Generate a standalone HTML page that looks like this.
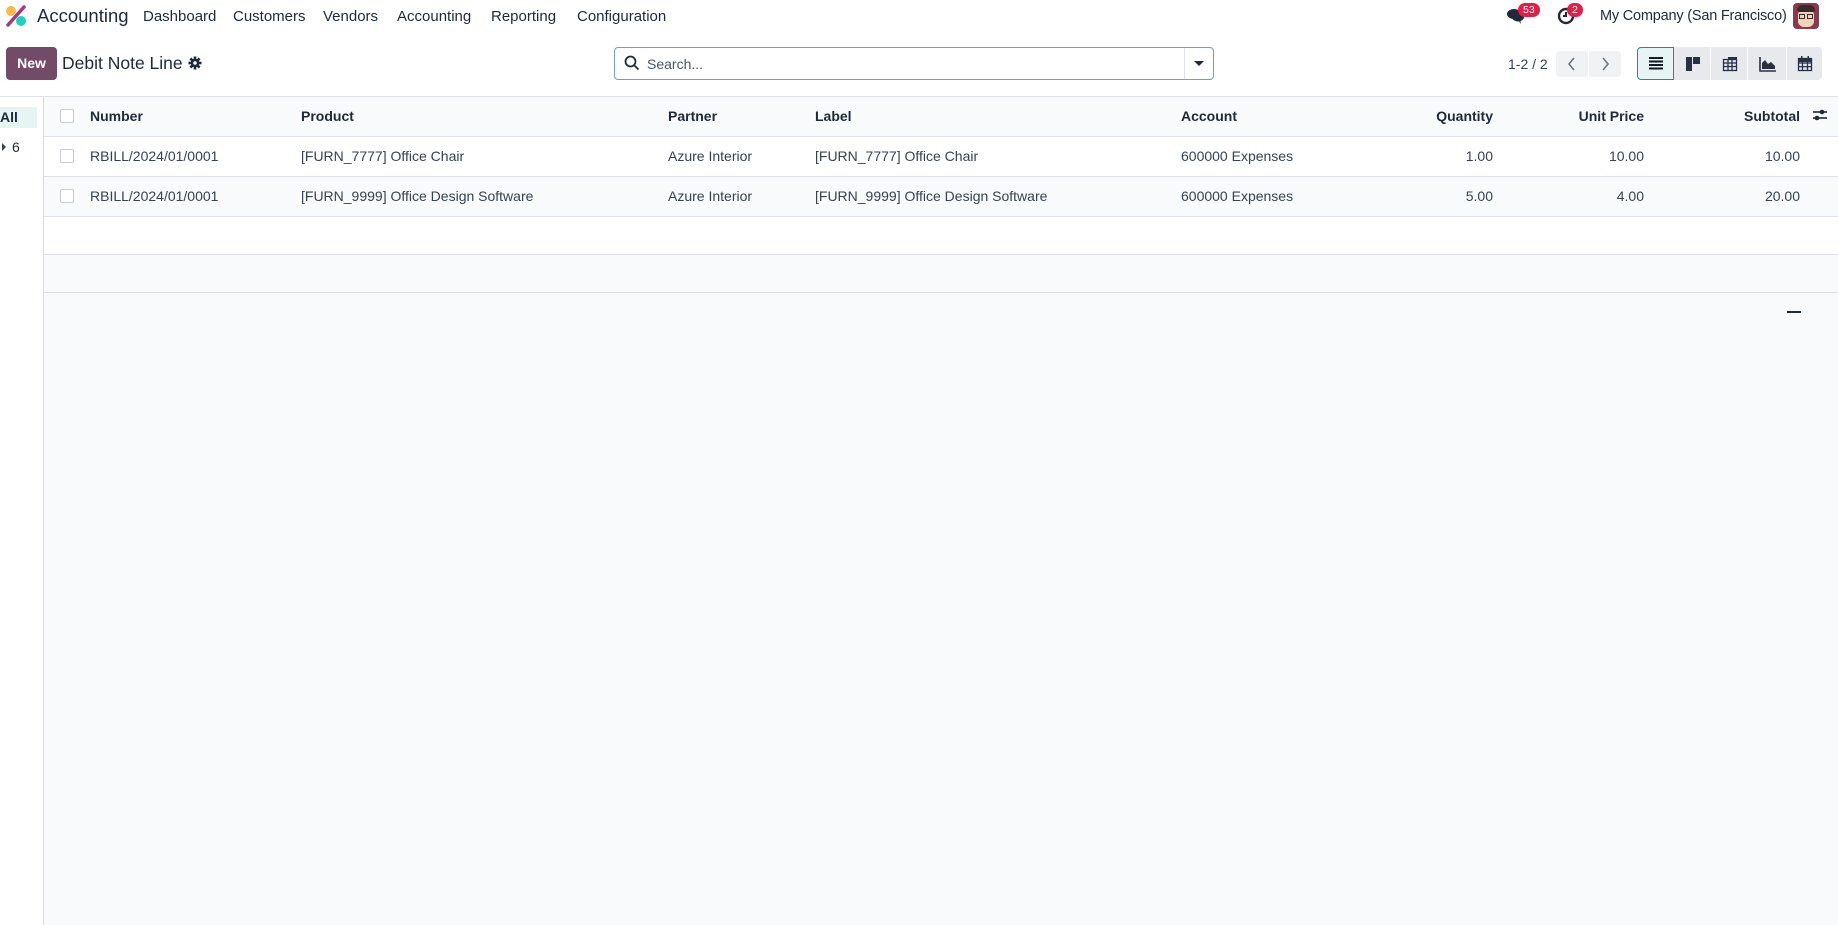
<!DOCTYPE html>
<html><head><meta charset="utf-8"><style>
*{box-sizing:border-box;margin:0;padding:0}
body{width:1838px;height:925px;overflow:hidden;background:#fff;font-family:"Liberation Sans",sans-serif;color:#374151;font-size:14px;position:relative}
.a{position:absolute;white-space:nowrap}
.nav{color:#1f2937;font-size:15px;top:8px}
.hd{font-weight:bold;color:#1f2937;font-size:14px}
.cb{position:absolute;width:14px;height:14px;border:1px solid #c7cbd1;background:#fff;border-radius:2px}
.hl{position:absolute;left:44px;right:0;height:1px;background:#dee2e6}
.vb{position:absolute;top:47px;height:33px;background:#e7e9ed;border-right:1px solid #fff}
</style></head><body>
<svg class="a" style="left:5px;top:5px" width="22" height="22" viewBox="0 0 22 22">
<circle cx="6" cy="6" r="5" fill="#fbb945"/><circle cx="16" cy="16" r="5" fill="#1ad3bb"/>
<line x1="3" y1="20" x2="19" y2="2" stroke="#a2397f" stroke-width="3.5" stroke-linecap="round"/></svg>
<div class="a" style="left:37px;top:5px;font-size:18.5px;color:#1f2937">Accounting</div>
<div class="a nav" style="left:143px">Dashboard</div>
<div class="a nav" style="left:233px">Customers</div>
<div class="a nav" style="left:323px">Vendors</div>
<div class="a nav" style="left:397px">Accounting</div>
<div class="a nav" style="left:491px">Reporting</div>
<div class="a nav" style="left:577px">Configuration</div>
<svg class="a" style="left:1506px;top:7px" width="20" height="18" viewBox="0 0 20 18"><ellipse cx="8" cy="7" rx="7" ry="5" fill="#1f2937"/><ellipse cx="12" cy="10" rx="6" ry="4.5" fill="#1f2937"/><path d="M12 13 L15 17 L14 12Z" fill="#1f2937"/></svg>
<div class="a" style="left:1518px;top:3px;background:#e11d48;color:#fff;font-size:10.5px;border-radius:8px;padding:1px 5px">53</div>
<svg class="a" style="left:1557px;top:7px" width="18" height="18" viewBox="0 0 18 18"><circle cx="9" cy="9" r="7" fill="none" stroke="#1f2937" stroke-width="2.4"/><path d="M9 5V9H6" stroke="#1f2937" stroke-width="2" fill="none"/></svg>
<div class="a" style="left:1567px;top:3px;background:#e11d48;color:#fff;font-size:10.5px;border-radius:8px;padding:1px 5px">2</div>
<div class="a" style="left:1600px;top:8px;font-size:14.5px;color:#1f2937;letter-spacing:-0.2px">My Company (San Francisco)</div>
<div class="a" style="left:1793px;top:3px;width:26px;height:26px;border-radius:4px;background:#8a3a4e;overflow:hidden">
<div style="position:absolute;left:5px;top:6px;width:16px;height:18px;background:#f3d3b8;border-radius:6px"></div>
<div style="position:absolute;left:4px;top:2px;width:18px;height:7px;background:#3a2a2a;border-radius:5px 5px 2px 2px"></div>
<div style="position:absolute;left:6px;top:11px;width:6px;height:5px;border:1.5px solid #333"></div>
<div style="position:absolute;left:14px;top:11px;width:6px;height:5px;border:1.5px solid #333"></div></div>
<div class="a" style="left:6px;top:47px;width:51px;height:33px;background:#714b67;border-radius:4px;color:#fff;font-weight:bold;font-size:14px;line-height:33px;text-align:center">New</div>
<div class="a" style="left:62px;top:53px;font-size:17.5px;color:#1f2937">Debit Note Line</div>
<svg class="a" style="left:188px;top:56px" width="14" height="14" viewBox="0 0 14 14"><g stroke="#1f2937" stroke-width="2.6"><line x1="7" y1="0.5" x2="7" y2="13.5"/><line x1="0.5" y1="7" x2="13.5" y2="7"/><line x1="2.4" y1="2.4" x2="11.6" y2="11.6"/><line x1="11.6" y1="2.4" x2="2.4" y2="11.6"/></g><circle cx="7" cy="7" r="4.2" fill="#1f2937"/><circle cx="7" cy="7" r="1.8" fill="#fff"/></svg>
<div class="a" style="left:614px;top:47px;width:600px;height:33px;border:1px solid #6aa8a5;border-radius:4px;background:#fff"></div>
<svg class="a" style="left:624px;top:55px" width="16" height="16" viewBox="0 0 16 16"><circle cx="6.5" cy="6.5" r="5" fill="none" stroke="#1f2937" stroke-width="1.8"/><line x1="10" y1="10" x2="14.5" y2="14.5" stroke="#1f2937" stroke-width="1.8"/></svg>
<div class="a" style="left:647px;top:56px;color:#4b5563;font-size:14px">Search...</div>
<div class="a" style="left:1184px;top:48px;width:1px;height:31px;background:#dee2e6"></div>
<div class="a" style="left:1194px;top:61px;width:0;height:0;border-left:5px solid transparent;border-right:5px solid transparent;border-top:5px solid #1f2937"></div>
<div class="a" style="left:1508px;top:56px;font-size:14px;color:#374151">1-2 / 2</div>
<div class="a" style="left:1556px;top:51px;width:32px;height:26px;background:#f1f2f4;border-radius:4px 0 0 4px"></div>
<div class="a" style="left:1589px;top:51px;width:32px;height:26px;background:#f1f2f4;border-radius:0 4px 4px 0"></div>
<svg class="a" style="left:1567px;top:57px" width="10" height="14" viewBox="0 0 10 14"><path d="M7 1L2 7L7 13" stroke="#6b7280" stroke-width="1.5" fill="none"/></svg>
<svg class="a" style="left:1600px;top:57px" width="10" height="14" viewBox="0 0 10 14"><path d="M3 1L8 7L3 13" stroke="#6b7280" stroke-width="1.5" fill="none"/></svg>
<div class="vb" style="left:1637px;width:37px;background:#e6f4f4;border:1px solid #2a8a86;border-radius:4px 0 0 4px"></div>
<div class="vb" style="left:1674px;width:37px"></div>
<div class="vb" style="left:1711px;width:37px"></div>
<div class="vb" style="left:1748px;width:39px"></div>
<div class="vb" style="left:1787px;width:35px;border-radius:0 4px 4px 0;border:0"></div>
<svg class="a" style="left:1648px;top:56px" width="16" height="14" viewBox="0 0 16 14"><g stroke="#111827" stroke-width="2"><line x1="1" y1="2" x2="15" y2="2"/><line x1="1" y1="5.5" x2="15" y2="5.5"/><line x1="1" y1="9" x2="15" y2="9"/><line x1="1" y1="12.5" x2="15" y2="12.5"/></g></svg>
<svg class="a" style="left:1685px;top:56px" width="16" height="16" viewBox="0 0 16 16"><rect x="1" y="1" width="6" height="14" fill="#2b2f45"/><rect x="8" y="1" width="7" height="7" fill="#2b2f45"/></svg>
<svg class="a" style="left:1722px;top:56px" width="16" height="16" viewBox="0 0 16 16"><g fill="none" stroke="#2b2f45" stroke-width="1.3"><rect x="1.5" y="3.5" width="13" height="11"/><line x1="1.5" y1="7" x2="14.5" y2="7"/><line x1="1.5" y1="10.5" x2="14.5" y2="10.5"/><line x1="6" y1="3.5" x2="6" y2="14.5"/><line x1="10" y1="3.5" x2="10" y2="14.5"/></g><rect x="6" y="1" width="9" height="2.5" fill="#2b2f45"/></svg>
<svg class="a" style="left:1759px;top:56px" width="18" height="16" viewBox="0 0 18 16"><path d="M1 1V15H17" stroke="#2b2f45" stroke-width="1.6" fill="none"/><path d="M3 13V7L6 4L9 8L12 6L16 10V13Z" fill="#2b2f45"/></svg>
<svg class="a" style="left:1797px;top:55px" width="16" height="17" viewBox="0 0 16 17"><g fill="none" stroke="#2b2f45" stroke-width="1.3"><rect x="1.5" y="3.5" width="13" height="12"/><line x1="1.5" y1="8" x2="14.5" y2="8"/><line x1="1.5" y1="11.7" x2="14.5" y2="11.7"/><line x1="5.5" y1="3.5" x2="5.5" y2="15.5"/><line x1="10.5" y1="3.5" x2="10.5" y2="15.5"/></g><rect x="1.5" y="3" width="13" height="4" fill="#2b2f45"/><rect x="4" y="1" width="1.5" height="3" fill="#2b2f45"/><rect x="10.5" y="1" width="1.5" height="3" fill="#2b2f45"/></svg>
<div class="a" style="left:0;top:96px;width:1838px;height:1px;background:#dee2e6"></div>
<div class="a" style="left:43px;top:97px;width:1px;height:828px;background:#d8dadd"></div>
<div class="a" style="left:0;top:107px;width:37px;height:21px;background:#e6f4f4"></div>
<div class="a" style="left:0;top:109px;font-weight:bold;color:#1f2937;font-size:14px">All</div>
<div class="a" style="left:2px;top:143px;width:0;height:0;border-top:4px solid transparent;border-bottom:4px solid transparent;border-left:4px solid #374151"></div>
<div class="a" style="left:12px;top:139px;color:#1f2937;font-size:14px">6</div>
<div class="a" style="left:44px;top:97px;right:0;bottom:0;background:#f9fafb"></div>
<div class="a" style="left:44px;top:136px;right:0;height:40px;background:#fff"></div>
<div class="a" style="left:44px;top:216px;right:0;height:38px;background:#fff"></div>
<div class="hl" style="top:136px"></div><div class="hl" style="top:176px"></div><div class="hl" style="top:216px"></div><div class="hl" style="top:254px"></div><div class="hl" style="top:292px"></div>
<div class="cb" style="left:60px;top:109px"></div><div class="cb" style="left:60px;top:149px"></div><div class="cb" style="left:60px;top:189px"></div>
<div class="a hd" style="left:90px;top:108px">Number</div>
<div class="a hd" style="left:301px;top:108px">Product</div>
<div class="a hd" style="left:668px;top:108px">Partner</div>
<div class="a hd" style="left:815px;top:108px">Label</div>
<div class="a hd" style="left:1181px;top:108px">Account</div>
<div class="a hd" style="right:345px;top:108px">Quantity</div>
<div class="a hd" style="right:194px;top:108px">Unit Price</div>
<div class="a hd" style="right:38px;top:108px">Subtotal</div>
<svg class="a" style="left:1812px;top:108px" width="16" height="14" viewBox="0 0 16 14"><g stroke="#1f2937" stroke-width="1.6"><line x1="1" y1="4" x2="15" y2="4"/><line x1="1" y1="10" x2="15" y2="10"/></g><circle cx="10" cy="4" r="2.3" fill="#1f2937"/><circle cx="5" cy="10" r="2.3" fill="#1f2937"/></svg>
<div class="a" style="left:90px;top:148px">RBILL/2024/01/0001</div>
<div class="a" style="left:301px;top:148px">[FURN_7777] Office Chair</div>
<div class="a" style="left:668px;top:148px">Azure Interior</div>
<div class="a" style="left:815px;top:148px">[FURN_7777] Office Chair</div>
<div class="a" style="left:1181px;top:148px">600000 Expenses</div>
<div class="a" style="right:345px;top:148px">1.00</div>
<div class="a" style="right:194px;top:148px">10.00</div>
<div class="a" style="right:38px;top:148px">10.00</div>
<div class="a" style="left:90px;top:188px">RBILL/2024/01/0001</div>
<div class="a" style="left:301px;top:188px">[FURN_9999] Office Design Software</div>
<div class="a" style="left:668px;top:188px">Azure Interior</div>
<div class="a" style="left:815px;top:188px">[FURN_9999] Office Design Software</div>
<div class="a" style="left:1181px;top:188px">600000 Expenses</div>
<div class="a" style="right:345px;top:188px">5.00</div>
<div class="a" style="right:194px;top:188px">4.00</div>
<div class="a" style="right:38px;top:188px">20.00</div>
<div class="a" style="left:1787px;top:311px;width:14px;height:2px;background:#1f2937"></div>
</body></html>
